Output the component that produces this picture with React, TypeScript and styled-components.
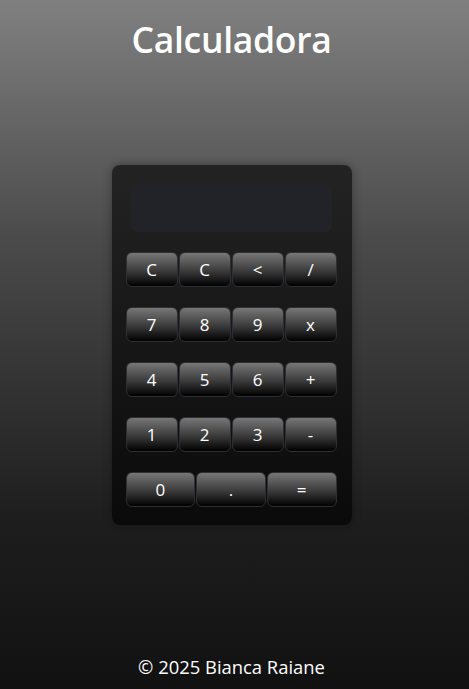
import React from "react";
import styled, { createGlobalStyle } from "styled-components";

const GlobalStyle = createGlobalStyle`
  html, body {
    margin: 0;
    padding: 0;
  }
  body {
    font-family: "Open Sans", "Noto Sans", "Liberation Sans", sans-serif;
    background: #111;
  }
`;

const Page = styled.div`
  min-height: 100vh;
  display: grid;
  grid-template-rows: 1fr auto 1fr;
  justify-items: center;
  padding-right: 6px;
  background: linear-gradient(to bottom, #808080 0%, #4a4a4a 35%, #1e1e1e 75%, #111111 100%);
  color: #fff;
`;

const Title = styled.h1`
  align-self: start;
  margin: 16px 0 0;
  font-size: 35.5px;
  font-weight: 600;
  letter-spacing: -0.3px;
  line-height: 46px;
`;

const Calculator = styled.div`
  width: 240px;
  box-sizing: border-box;
  padding: 19px 15px 18px 14px;
  border-radius: 8px;
  background: linear-gradient(to bottom, #232323, #0a0a0a);
  box-shadow: 0 0 10px rgba(0, 0, 0, 0.35);
`;

const Display = styled.div`
  height: 48px;
  margin: 0 5px 20px;
  border-radius: 6px;
  background: #212328;
`;

const Keys = styled.div`
  display: flex;
  flex-direction: column;
  gap: 20px;
`;

const Row = styled.div`
  display: flex;
  gap: 1px;
`;

const Key = styled.button`
  flex: 1;
  height: 35px;
  padding: 0;
  border: 1px solid #2c2f33;
  border-radius: 6px;
  background: linear-gradient(to bottom, #777 0%, #3a3a3a 55%, #000 100%);
  color: #fff;
  font-family: "Open Sans", "Noto Sans", sans-serif;
  font-size: 17px;
  cursor: pointer;
`;

const Footer = styled.footer`
  align-self: end;
  padding-bottom: 10px;
  font-size: 18.4px;
  line-height: 24px;
`;

const rows = [
  ["C", "C", "<", "/"],
  ["7", "8", "9", "x"],
  ["4", "5", "6", "+"],
  ["1", "2", "3", "-"],
  ["0", ".", "="],
];

export default function App() {
  return (
    <>
      <GlobalStyle />
      <Page>
        <Title>Calculadora</Title>
        <Calculator>
          <Display />
          <Keys>
            {rows.map((row, i) => (
              <Row key={i}>
                {row.map((k, j) => (
                  <Key key={j}>{k}</Key>
                ))}
              </Row>
            ))}
          </Keys>
        </Calculator>
        <Footer>© 2025 Bianca Raiane</Footer>
      </Page>
    </>
  );
}
